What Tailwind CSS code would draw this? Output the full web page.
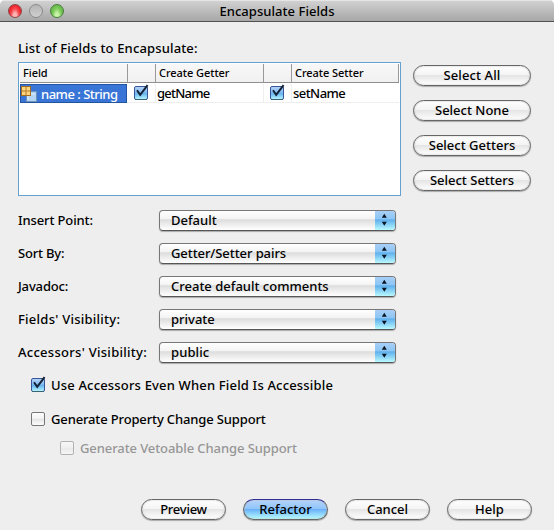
<!DOCTYPE html>
<html lang="en">
<head>
<meta charset="utf-8">
<title>Encapsulate Fields</title>
<script src="https://cdn.jsdelivr.net/npm/@tailwindcss/browser@4"></script>
</head>
<body class="w-[554px] h-[530px] overflow-hidden bg-white font-['Noto_Sans','Open_Sans',sans-serif] text-[13px] leading-[18px] font-medium text-black">
<svg width="0" height="0" class="absolute">
  <defs>
    <linearGradient id="blue" x2="0" y2="1"><stop stop-color="#b5d3f5"/><stop offset=".45" stop-color="#85bdf1"/><stop offset=".5" stop-color="#60aeed"/><stop offset="1" stop-color="#b9fafe"/></linearGradient>
    <linearGradient id="white" x2="0" y2="1"><stop stop-color="#fff"/><stop offset=".45" stop-color="#f3f3f3"/><stop offset=".5" stop-color="#e4e4e4"/><stop offset="1" stop-color="#fff"/></linearGradient>
    <symbol id="on" viewBox="0 0 17 17"><rect x="1.5" y="2.5" width="13" height="13" rx="1.5" fill="url(#blue)" stroke="#39559a"/><path d="M2 15.5h12" stroke="#3c6275"/><path d="M4 6.2l3.2 4.6L14.6 1.2" fill="none" stroke="#142236" stroke-width="2"/></symbol>
    <symbol id="off" viewBox="0 0 17 17"><rect x="1.5" y="2.5" width="13" height="13" rx="1.5" fill="url(#white)" stroke="#777"/></symbol>
    <symbol id="arrows" viewBox="0 0 20 20"><path d="M6.8 7.8L9.3 3.8l2.5 4zM6.8 11.8h5l-2.5 4z" fill="#0b1524"/></symbol>
  </defs>
</svg>
<div class="flex h-[530px] flex-col overflow-hidden rounded-t-[5px] bg-[#eee]">
  <header class="relative flex h-[22px] shrink-0 items-center justify-center border-b border-[#515151] bg-linear-to-b from-[#d3d3d3] to-[#a7a7a7] shadow-[inset_0_1px_#e5e5e5]">
    <div class="absolute left-[8px] top-[4px] flex gap-[7px]">
      <i class="size-[14px] rounded-full border border-[#8d4547] bg-[radial-gradient(ellipse_at_50%_95%,#ffb4b4_20%,#f64a50_48%,#ee1c25_75%,#f7bcbc_100%)]"></i>
      <i class="size-[14px] rounded-full border border-[#898989] bg-linear-to-b from-[#b5b5b5] to-[#d0d0d0]"></i>
      <i class="size-[14px] rounded-full border border-[#497d3e] bg-[radial-gradient(ellipse_at_50%_95%,#c7f4a8_20%,#83ce61_48%,#62b747_75%,#d8edcc_100%)]"></i>
    </div>
    <h1 class="tracking-[.05px]">Encapsulate Fields</h1>
  </header>
  <main class="flex flex-1 flex-col pl-[18px]">
    <h2 class="mt-[17px] h-[18px] tracking-[.15px]">List of Fields to Encapsulate:</h2>
    <div class="mt-[5px] flex h-[134px] gap-[12px]">
      <div class="h-[134px] w-[383px] border border-[#64a0d0] bg-white p-px">
        <div class="flex h-[19px] border-b border-[#8f8f8f] bg-linear-to-b from-[#f8f8f8] to-[#f0f0f0] text-[11px] leading-[17px] tracking-[-.05px]">
          <div class="w-[108px] border-r border-[#999] pl-[3px]">Field</div>
          <div class="w-[28px] border-r border-[#999]"></div>
          <div class="w-[108px] border-r border-[#999] pl-[3px]">Create Getter</div>
          <div class="w-[28px] border-r border-[#999]"></div>
          <div class="w-[107px] border-r border-[#999] pl-[3px]">Create Setter</div>
        </div>
        <div class="flex h-[20px] border-b border-[#eee] pt-px">
          <div class="mr-px flex h-[19px] w-[107px] items-center border border-[#2454a0] bg-[#3875d7] text-white">
            <svg class="mr-[4px] h-[16px] w-[16px] shrink-0" viewBox="0 0 16 16"><rect x="5.5" y="5.5" width="10" height="10" fill="#b5d5f5" stroke="#6e92b8"/><path d="M7 14V8h7" stroke="#dceefe" fill="none"/><rect x=".5" y=".5" width="9" height="9" fill="#fad57e" stroke="#a56b21"/><path d="M5 1v8M1 5h8" stroke="#b87a29"/></svg>
            <span class="whitespace-nowrap tracking-[-.5px]">name : String</span>
          </div>
          <div class="w-[27px] pl-[5px]"><svg class="size-[17px]"><use href="#on"/></svg></div>
          <div class="w-[109px] border-x border-[#eee] pl-px tracking-[-.75px]">getName</div>
          <div class="w-[27px] pl-[5px]"><svg class="size-[17px]"><use href="#on"/></svg></div>
          <div class="flex-1 border-l border-[#eee] pl-px tracking-[-.55px]">setName</div>
        </div>
      </div>
      <div class="flex flex-col gap-[14px] pt-[3px] text-center leading-[19px] *:h-[21px] *:w-[118px] *:rounded-full *:border *:border-[#666] *:bg-[linear-gradient(#fff,#f4f4f4_46%,#e5e5e5_50%,#fff)] *:shadow-[0_1px_1px_#aaa,inset_0_0_2px_#bbb]">
        <button class="tracking-[.1px]">Select All</button>
        <button>Select None</button>
        <button>Select Getters</button>
        <button>Select Setters</button>
      </div>
    </div>
    <div class="mt-[14px] flex flex-col gap-[12px]">
      <div class="flex h-[21px]"><label class="w-[141px] pt-px tracking-[-.12px]">Insert Point:</label><div class="flex w-[237px] justify-between overflow-hidden rounded-[4px] border border-[#777] border-b-[#555] bg-[linear-gradient(#fff,#f4f4f4_40%,#ddd_46%,#fff)] pl-[11px] shadow-[0_1px_1px_#aaa]"><span>Default</span><svg class="-mt-px h-[20px] w-[20px] bg-[linear-gradient(#291e8d_1px,#a8cff7_1px,#8cc5f4_45%,#5eafed_49%,#b9f9ff)]"><use href="#arrows"/></svg></div></div>
      <div class="flex h-[21px]"><label class="w-[141px] pt-px tracking-[-.2px]">Sort By:</label><div class="flex w-[237px] justify-between overflow-hidden rounded-[4px] border border-[#777] border-b-[#555] bg-[linear-gradient(#fff,#f4f4f4_40%,#ddd_46%,#fff)] pl-[11px] shadow-[0_1px_1px_#aaa]"><span class="tracking-[-.08px]">Getter/Setter pairs</span><svg class="-mt-px h-[20px] w-[20px] bg-[linear-gradient(#291e8d_1px,#a8cff7_1px,#8cc5f4_45%,#5eafed_49%,#b9f9ff)]"><use href="#arrows"/></svg></div></div>
      <div class="flex h-[21px]"><label class="w-[141px] pt-px tracking-[-.15px]">Javadoc:</label><div class="flex w-[237px] justify-between overflow-hidden rounded-[4px] border border-[#777] border-b-[#555] bg-[linear-gradient(#fff,#f4f4f4_40%,#ddd_46%,#fff)] pl-[11px] shadow-[0_1px_1px_#aaa]"><span>Create default comments</span><svg class="-mt-px h-[20px] w-[20px] bg-[linear-gradient(#291e8d_1px,#a8cff7_1px,#8cc5f4_45%,#5eafed_49%,#b9f9ff)]"><use href="#arrows"/></svg></div></div>
      <div class="flex h-[21px]"><label class="w-[141px] pt-px tracking-[.25px]">Fields' Visibility:</label><div class="flex w-[237px] justify-between overflow-hidden rounded-[4px] border border-[#777] border-b-[#555] bg-[linear-gradient(#fff,#f4f4f4_40%,#ddd_46%,#fff)] pl-[11px] shadow-[0_1px_1px_#aaa]"><span>private</span><svg class="-mt-px h-[20px] w-[20px] bg-[linear-gradient(#291e8d_1px,#a8cff7_1px,#8cc5f4_45%,#5eafed_49%,#b9f9ff)]"><use href="#arrows"/></svg></div></div>
      <div class="flex h-[21px]"><label class="w-[141px] pt-px tracking-[.28px]">Accessors' Visibility:</label><div class="flex w-[237px] justify-between overflow-hidden rounded-[4px] border border-[#777] border-b-[#555] bg-[linear-gradient(#fff,#f4f4f4_40%,#ddd_46%,#fff)] pl-[11px] shadow-[0_1px_1px_#aaa]"><span class="tracking-[.1px]">public</span><svg class="-mt-px h-[20px] w-[20px] bg-[linear-gradient(#291e8d_1px,#a8cff7_1px,#8cc5f4_45%,#5eafed_49%,#b9f9ff)]"><use href="#arrows"/></svg></div></div>
    </div>
    <label class="ml-[12px] mt-[13px] flex h-[18px] gap-[4px]"><svg class="size-[17px]"><use href="#on"/></svg><span class="tracking-[.17px]">Use Accessors Even When Field Is Accessible</span></label>
    <label class="ml-[12px] mt-[16px] flex h-[18px] gap-[4px]"><svg class="size-[17px]"><use href="#off"/></svg><span class="tracking-[-.14px]">Generate Property Change Support</span></label>
    <label class="ml-[41px] mt-[11px] flex h-[18px] gap-[4px] text-[#969696]"><svg class="size-[17px] opacity-50"><use href="#off"/></svg><span class="tracking-[-.09px]">Generate Vetoable Change Support</span></label>
    <div class="ml-[123px] mt-[42px] flex gap-[17px] text-center leading-[19px] *:h-[21px] *:w-[85px] *:rounded-full *:border *:border-[#666] *:shadow-[0_1px_1px_#aaa,inset_0_0_2px_#bbb]">
      <button class="bg-[linear-gradient(#fff,#f4f4f4_46%,#e5e5e5_50%,#fff)] tracking-[-.25px]">Preview</button>
      <button class="border-t-[#332d91]! bg-[linear-gradient(#b5d4fa,#91c5fb_45%,#69b2f8_50%,#b9fcff)]">Refactor</button>
      <button class="bg-[linear-gradient(#fff,#f4f4f4_46%,#e5e5e5_50%,#fff)]">Cancel</button>
      <button class="bg-[linear-gradient(#fff,#f4f4f4_46%,#e5e5e5_50%,#fff)]">Help</button>
    </div>
  </main>
</div>
</body>
</html>
